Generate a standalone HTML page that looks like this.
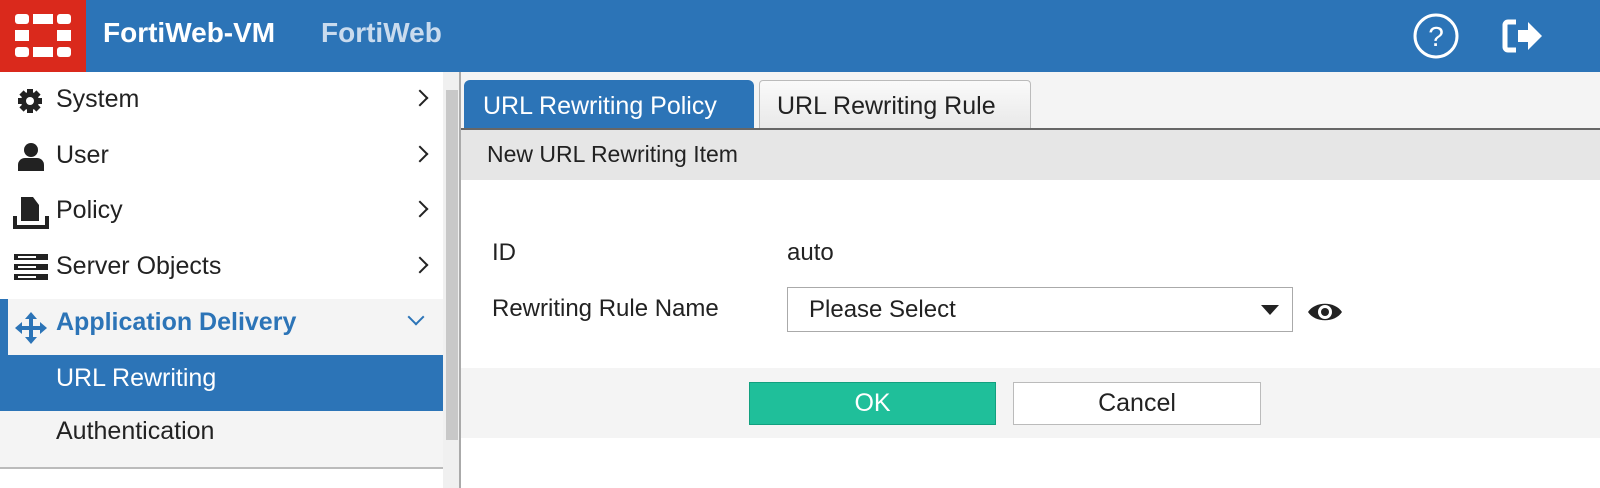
<!DOCTYPE html>
<html><head><style>
*{margin:0;padding:0;box-sizing:border-box}
body{width:1600px;height:488px;overflow:hidden;background:#fff;font-family:"Liberation Sans",sans-serif;position:relative;color:#222}
.abs{position:absolute}
.hdr{left:0;top:0;width:1600px;height:72px;background:#2c74b7}
.logo{left:0;top:0;width:86px;height:72px;background:#da291c}
.t{white-space:nowrap}
.row{left:0;width:443px;height:56px;font-size:25px}
.row span{position:absolute;left:56px;top:13px}
.chev{position:absolute;left:414px;top:20px;width:12px;height:12px;border-right:2.5px solid #222;border-top:2.5px solid #222;transform:rotate(45deg)}
</style></head><body>
<div class="abs hdr"></div>
<div class="abs logo">
<svg width="86" height="72" viewBox="0 0 86 72"><g fill="#fff">
<rect x="15" y="14" width="14" height="10" rx="3"/><rect x="33" y="14" width="20" height="10"/><rect x="57" y="14" width="14" height="10" rx="3"/>
<rect x="15" y="30" width="14" height="11"/><rect x="57" y="30" width="14" height="11"/>
<rect x="15" y="47" width="14" height="10" rx="3"/><rect x="33" y="47" width="20" height="10"/><rect x="57" y="47" width="14" height="10" rx="3"/></g></svg></div>
<div class="abs t" style="left:103px;top:17px;font-size:28px;font-weight:bold;color:#fff">FortiWeb-VM</div>
<div class="abs t" style="left:321px;top:17px;font-size:28px;font-weight:bold;color:#c9dbee">FortiWeb</div>
<svg class="abs" style="left:1412px;top:12px" width="48" height="48" viewBox="0 0 48 48"><circle cx="24" cy="24" r="21" fill="none" stroke="#fff" stroke-width="3"/><text x="24" y="34" text-anchor="middle" font-size="28" fill="#fff" font-family="Liberation Sans">?</text></svg>
<svg class="abs" style="left:1502px;top:18px" width="42" height="36" viewBox="0 0 42 36"><path d="M14 4H6a3 3 0 0 0-3 3v22a3 3 0 0 0 3 3h8" fill="none" stroke="#fff" stroke-width="5"/><path d="M16 12h10V4l14 14-14 14v-8H16z" fill="#fff"/></svg>

<!-- sidebar -->
<div class="abs" style="left:0;top:72px;width:443px;height:416px;background:#fff"></div>
<div class="abs" style="left:443px;top:72px;width:16px;height:416px;background:#f0f0f0"></div>
<div class="abs" style="left:446px;top:90px;width:12px;height:350px;background:#c8c8c8"></div>
<div class="abs" style="left:459px;top:72px;width:2px;height:416px;background:#aaa"></div>

<div class="abs row" style="top:72px"><svg class="abs" style="left:16px;top:15px" width="28" height="28" viewBox="0 0 28 28"><circle cx="14" cy="14" r="9" fill="#222"/><g stroke="#222" stroke-width="6"><path d="M14 2v24M2 14h24M5.5 5.5l17 17M22.5 5.5l-17 17"/></g><circle cx="14" cy="14" r="4" fill="#fff"/></svg><span>System</span><div class="chev"></div></div>
<div class="abs row" style="top:128px"><svg class="abs" style="left:17px;top:14px" width="28" height="30" viewBox="0 0 28 30"><circle cx="14" cy="8" r="7" fill="#222"/><path d="M1 29v-6a7 7 0 0 1 7-7h12a7 7 0 0 1 7 7v6z" fill="#222"/></svg><span>User</span><div class="chev"></div></div>
<div class="abs row" style="top:183px"><svg class="abs" style="left:13px;top:14px" width="36" height="32" viewBox="0 0 36 32"><path d="M8 0h12l6 8v16H8z" fill="#222"/><path d="M2 19v11h32V19" fill="none" stroke="#222" stroke-width="4"/></svg><span>Policy</span><div class="chev"></div></div>
<div class="abs row" style="top:239px"><svg class="abs" style="left:14px;top:15px" width="34" height="26" viewBox="0 0 34 26"><g fill="#222"><rect y="0" width="34" height="6"/><rect y="10" width="34" height="6"/><rect y="20" width="34" height="6"/></g><g fill="#fff"><rect x="4" y="2" width="18" height="2"/><rect x="4" y="12" width="18" height="2"/><rect x="4" y="22" width="18" height="2"/></g></svg><span>Server Objects</span><div class="chev"></div></div>
<div class="abs row" style="top:299px;height:56px;background:#f4f4f4"><div class="abs" style="left:0;top:0;width:8px;height:56px;background:#2c74b7"></div><svg class="abs" style="left:14px;top:12px" width="34" height="34" viewBox="0 0 34 34"><path d="M17 1l6 7h-4v7h7v-4l7 6-7 6v-4h-7v7h4l-6 7-6-7h4v-7H8v4l-7-6 7-6v4h7V8h-4z" fill="#2c74b7"/></svg><span style="color:#2c74b7;font-weight:bold;top:9px">Application Delivery</span><div class="chev" style="border-color:#2c74b7;transform:rotate(135deg);top:12px;left:410px"></div></div>
<div class="abs row" style="top:355px;background:#2c74b7;color:#fff"><span style="top:9px">URL Rewriting</span></div>
<div class="abs row" style="top:411px;background:#f4f4f4;border-bottom:2px solid #bbb;height:58px"><span style="top:6px">Authentication</span></div>

<!-- main -->
<div class="abs" style="left:461px;top:72px;width:1139px;height:58px;background:#f4f4f4"></div>
<div class="abs t" style="left:464px;top:80px;width:290px;height:49px;background:#2c74b7;border-radius:6px 6px 0 0;color:#fff;font-size:25px;padding:12px 0 0 19px">URL Rewriting Policy</div>
<div class="abs t" style="left:759px;top:80px;width:272px;height:49px;background:linear-gradient(#fafafa,#e8e8e8);border:1px solid #bbb;border-bottom:none;border-radius:4px 4px 0 0;font-size:25px;padding:11px 0 0 17px">URL Rewriting Rule</div>
<div class="abs" style="left:461px;top:128px;width:1139px;height:2px;background:#666"></div>
<div class="abs" style="left:461px;top:130px;width:1139px;height:50px;background:#e6e6e6"></div>
<div class="abs t" style="left:487px;top:141px;font-size:23px">New URL Rewriting Item</div>
<div class="abs t" style="left:492px;top:239px;font-size:24px">ID</div>
<div class="abs t" style="left:787px;top:239px;font-size:24px">auto</div>
<div class="abs t" style="left:492px;top:295px;font-size:24px">Rewriting Rule Name</div>
<div class="abs" style="left:787px;top:287px;width:506px;height:45px;border:1px solid #aaa;background:#fff"></div>
<div class="abs t" style="left:809px;top:296px;font-size:24px">Please Select</div>
<div class="abs" style="left:1261px;top:305px;width:0;height:0;border-left:9px solid transparent;border-right:9px solid transparent;border-top:10px solid #222"></div>
<svg class="abs" style="left:1307px;top:299px" width="36" height="26" viewBox="0 0 36 26"><path d="M1 13C8 2 28 2 35 13 28 24 8 24 1 13z" fill="#222"/><circle cx="18" cy="13" r="7" fill="#fff"/><circle cx="18" cy="13" r="4" fill="#222"/></svg>
<div class="abs" style="left:461px;top:368px;width:1139px;height:70px;background:#f4f4f4"></div>
<div class="abs t" style="left:749px;top:382px;width:247px;height:43px;background:#1fbf9a;border:1px solid #12a07f;color:#fff;font-size:25px;text-align:center;line-height:41px">OK</div>
<div class="abs t" style="left:1013px;top:382px;width:248px;height:43px;background:#fff;border:1px solid #bbb;font-size:25px;text-align:center;line-height:41px">Cancel</div>
</body></html>
